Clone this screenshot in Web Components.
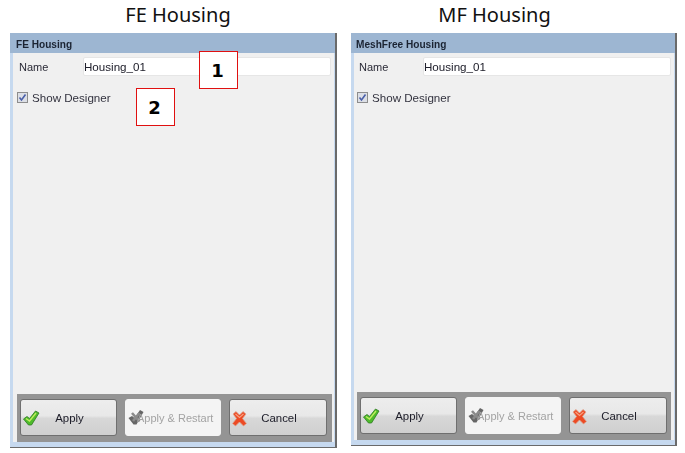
<!DOCTYPE html>
<html>
<head>
<meta charset="utf-8">
<title>Housing</title>
<style>
	html, body { margin: 0; padding: 0; background: #fff; }
	body { width: 685px; height: 453px; overflow: hidden; font-family: "Liberation Sans", Arial, sans-serif; }
	.page { display: flex; gap: 14px; padding-left: 10px; }
</style>
</head>
<body>
<div class="page">
	<housing-panel heading="FE Housing" caption="FE Housing" value="Housing_01" style="--w:327px;--h:415px;--head-l:9px;--head-r:0px;--inset:6px;--label-w:64px;--bar-l:4px;--bar-r:2px;">
		<call-out n="1" style="left:189px;top:51px;"></call-out>
		<call-out n="2" style="left:126px;top:88px;"></call-out>
	</housing-panel>
	<housing-panel heading="MF Housing" caption="MeshFree Housing" value="Housing_01" style="--w:326px;--h:413px;--head-l:0px;--head-r:39px;--inset:5px;--label-w:64px;--bar-l:3px;--bar-r:3px;"></housing-panel>
</div>

<template id="btn-tpl">
	<style>
		:host { display: flex; align-items: center; position: relative; height: 37px; box-sizing: border-box;
			border: 1px solid #6f6f6f; border-radius: 3px; background: linear-gradient(#ededed, #e8e8e8 45%, #d8d8d8 52%, #cfcfcf);
			font-size: 11.4px; color: #1c1c28; }
		:host([disabled]) { border-color: #f4f4f4; background: #f4f4f4; color: #a3a3a3; font-size: 11px; }
		.ico { width: 22px; height: 20px; margin-left: 1px; flex: none; display: flex; }
		.lab { flex: 1; text-align: center; padding-right: 21px; white-space: nowrap; }
		:host([disabled]) .ico { margin-right: -12px; }
		:host([disabled]) .lab { padding-right: 0; text-align: left; position: relative; }
	</style>
	<span class="ico"><slot name="icon"></slot></span>
	<span class="lab"><slot></slot></span>
</template>

<template id="panel-tpl">
	<style>
		:host { display: flex; flex-direction: column; position: relative; width: var(--w); }
		h2 { margin: 0; height: 33px; box-sizing: border-box; padding: 3px var(--head-r) 0 var(--head-l); text-align: center;
			font: 400 20px/24px "Noto Sans", "Open Sans", sans-serif; color: #111; }
		.frame { height: var(--h); box-sizing: border-box; display: flex; flex-direction: column; filter: blur(.3px);
			background: #c6d9ef; border-right: 2px solid #6a6a6a; border-bottom: 1px solid #6a6a6a; }
		.title { height: 20px; flex: none; background: #9db6d2; box-sizing: border-box; padding: 5px 0 0 var(--inset);
			font-size: 10.1px; line-height: 14px; font-weight: 700; color: #1b2433; }
		.body { flex: 1; margin: 0 1px 5px 3px; background: #f0f0f0; display: flex; flex-direction: column; }
		.row { display: flex; align-items: center; padding: 4px 3px 0 var(--inset); color: #2a2a36; font-size: 11px; }
		.row label { width: var(--label-w); flex: none; }
		.field { flex: 1; height: 19px; box-sizing: border-box; background: #fff; border: 1px solid #e6e6e6; border-radius: 2px;
			padding-left: 0; font-size: 11.6px; line-height: 18px; color: #20202c; }
		.check { display: flex; align-items: center; gap: 4px; padding: 15px 0 0 calc(var(--inset) - 2px); font-size: 11.6px; color: #33333f; }
		.box { width: 11px; height: 11px; flex: none; box-sizing: border-box; border: 1px solid #8d8d8d; background: #dcdfe6; display: flex; }
		.spacer { flex: 1; }
		.bar { margin: 0 var(--bar-r) 0 var(--bar-l); height: 48px; flex: none; box-sizing: border-box; background: #949494;
			display: grid; grid-template-columns: 97px 96px 98px; column-gap: 8px; padding: 5px 0 0 3px; }
		.bar svg { display: block; }
	</style>
	<h2></h2>
	<div class="frame">
		<div class="title"></div>
		<div class="body">
			<div class="row"><label>Name</label><div class="field"></div></div>
			<div class="check">
				<span class="box"><svg width="9" height="9" viewBox="0 0 9 9"><path d="M1.5 4.5 L3.5 7 L7.5 1.5" fill="none" stroke="#4a5fa8" stroke-width="1.6"/></svg></span>
				<span>Show Designer</span>
			</div>
			<div class="spacer"></div>
			<div class="bar">
				<housing-btn>
					<svg slot="icon" width="22" height="20" viewBox="0 0 22 20"><path d="M1.5 11 L5 8.5 L7.5 10.5 L13.5 3 L17 5 L9.5 17 L6.5 17 Z" fill="#4fbb2c" stroke="#2c7a20" stroke-width=".8"/><path d="M4 10.5 L7.5 13 L14 5" fill="none" stroke="#c0ee5e" stroke-width="1.3"/></svg>
					Apply
				</housing-btn>
				<housing-btn disabled>
					<svg slot="icon" width="22" height="20" viewBox="0 0 22 20"><path d="M1.5 10 L5 8 L7.5 10 L13 2 L16.5 4 L9.5 16.5 L6.5 16.5 Z" fill="#666"/><path d="M5 5 L12.5 13.5 M12.5 5 L6 13" stroke="#8a8a8a" stroke-width="2.6"/></svg>
					Apply &amp; Restart
				</housing-btn>
				<housing-btn>
					<svg slot="icon" width="22" height="20" viewBox="0 0 22 20"><path d="M2 6 L5 3.5 L8.5 7 L12 3.5 L15 6 L11.5 10.5 L15.5 15.5 L12.5 18 L8.5 14 L4.5 18 L1.5 15.5 L5.5 10.5 Z" fill="#ec4a24" stroke="#dba692" stroke-width=".8"/><path d="M4.5 6 L8.5 9.5 L12.5 6" fill="none" stroke="#f8a080" stroke-width="1.2"/></svg>
					Cancel
				</housing-btn>
			</div>
		</div>
	</div>
	<slot></slot>
</template>

<script>
	class HousingBtn extends HTMLElement {
		constructor() {
			super();
			this.attachShadow({ mode: "open" });
			this.shadowRoot.appendChild(document.getElementById("btn-tpl").content.cloneNode(true));
		}
	}

	class HousingPanel extends HTMLElement {
		constructor() {
			super();
			this.attachShadow({ mode: "open" });
			this.shadowRoot.appendChild(document.getElementById("panel-tpl").content.cloneNode(true));
		}

		connectedCallback() {
			this.shadowRoot.querySelector("h2").textContent = this.getAttribute("heading");
			this.shadowRoot.querySelector(".title").textContent = this.getAttribute("caption");
			this.shadowRoot.querySelector(".field").textContent = this.getAttribute("value");
		}
	}

	class CallOut extends HTMLElement {
		constructor() {
			super();
			this.attachShadow({ mode: "open" });
		}

		connectedCallback() {
			this.shadowRoot.innerHTML = `
				<style>
					:host { position: absolute; width: 39px; height: 38px; box-sizing: border-box; border: 1px solid #e01010; background: #fff; padding-right: 2px;
						display: flex; align-items: center; justify-content: center; font: 700 18px "DejaVu Sans", sans-serif; color: #000; }
				</style>
				${this.getAttribute("n")}
			`;
		}
	}

	customElements.define("housing-btn", HousingBtn);
	customElements.define("housing-panel", HousingPanel);
	customElements.define("call-out", CallOut);
</script>
</body>
</html>
